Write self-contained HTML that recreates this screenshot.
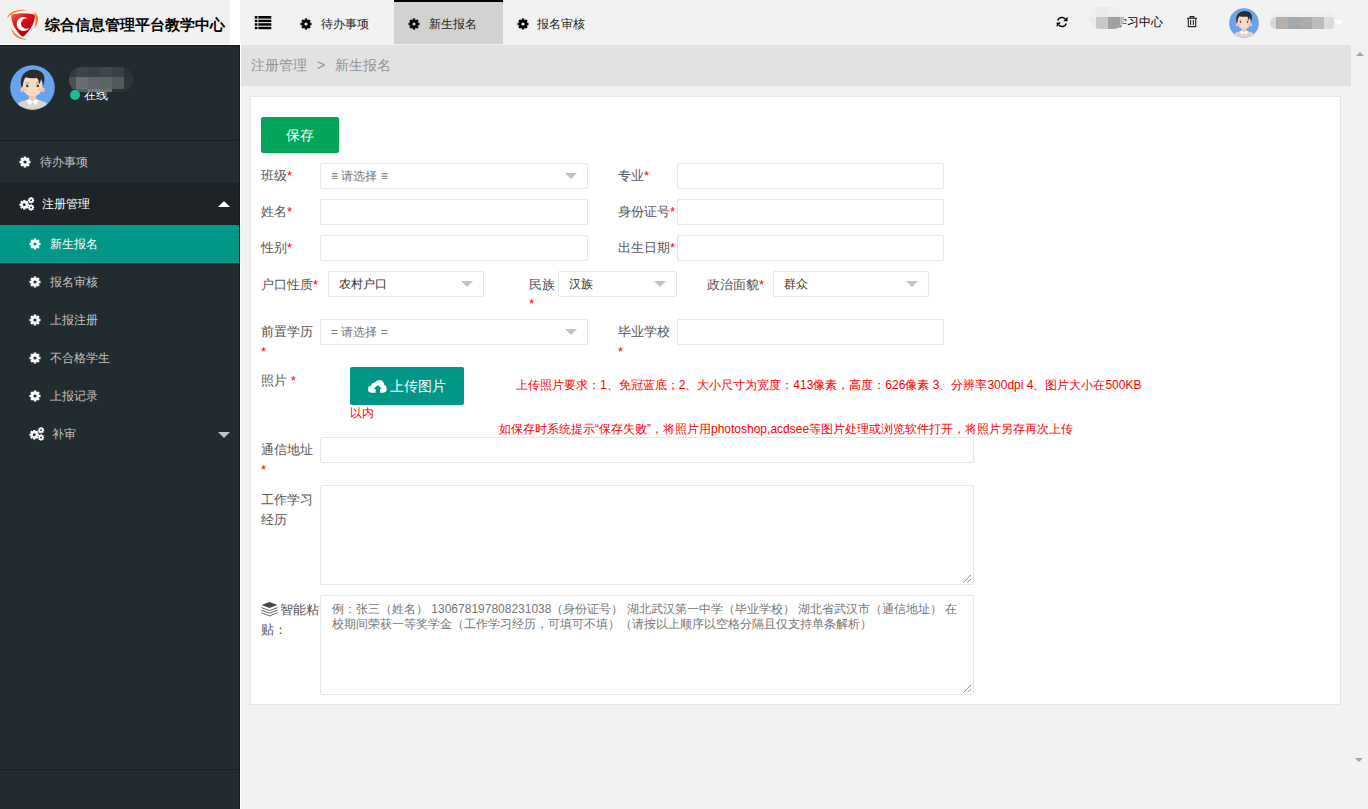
<!DOCTYPE html>
<html><head><meta charset="utf-8">
<style>
*{box-sizing:border-box;margin:0;padding:0}
html,body{width:1368px;height:809px;overflow:hidden;background:#f2f2f2;font-family:"Liberation Sans",sans-serif;color:#333}
.abs{position:absolute}
#logo{left:0;top:0;width:230px;height:44px;background:#f0f0f0}
#logostrip{left:230px;top:0;width:10px;height:45px;background:#fff}
#hdr{left:240px;top:0;width:1128px;height:44px;background:#f2f2f2}
#hline{left:0;top:44px;width:241px;height:1px;background:#fff}
#side{left:0;top:45px;width:240px;height:764px;background:#222b30;border-top:1px solid #131c21;border-right:1px solid #151b1f}
#vline{left:240px;top:45px;width:1px;height:764px;background:#fff}
#crumb{left:241px;top:45px;width:1110px;height:41px;background:#e2e2e2}
#panel{left:250px;top:96px;width:1091px;height:609px;background:#fff;border:1px solid #e6e6e6}
.tabtxt{font-size:12px;color:#222;top:16px;line-height:16px}
.menu{left:0;width:239px;height:38px;font-size:12px;color:#c2c2c2;line-height:38px}
.lbl{font-size:13px;color:#555;line-height:16px}
.req{color:#f00}
.inp{background:#fff;border:1px solid #e6e6e6;border-radius:2px;height:26px}
.sel .tri{position:absolute;right:10px;top:9px;width:0;height:0;border-left:6px solid transparent;border-right:6px solid transparent;border-top:6px solid #c2c2c2}
.seltxt{position:absolute;left:10px;top:5px;font-size:12px;line-height:14px;color:#333}
.ph{color:#757575}
.red{color:#f00;font-size:12px;line-height:14px}
</style></head><body>


<div id="logo" class="abs">
<svg class="abs" style="left:0;top:0" width="45" height="44" viewBox="0 0 45 44">
<defs><linearGradient id="lg1" x1="0.1" y1="0" x2="0.8" y2="1"><stop offset="0" stop-color="#ee6a4e"/><stop offset="0.3" stop-color="#dc1a1c"/><stop offset="0.7" stop-color="#c8000e"/><stop offset="1" stop-color="#9a0008"/></linearGradient></defs>
<path d="M11.2 16.6 Q10.8 14.4 13.2 13.9 Q22.6 12.4 32.8 14.1 Q35.4 14.7 34.9 17.3 C34 24.4 28.8 31.8 24.4 35.8 Q22.8 37.3 21.2 35.8 C16.6 31.6 11.8 24.4 11.2 16.6Z" fill="url(#lg1)"/>
<path d="M28.19 18.80 A7 7 0 1 0 29.74 27.17 A5.1 5.1 0 1 1 28.19 18.80Z" fill="#fff"/>
<path d="M7 18.8 Q8.6 11.6 17 10.4 Q22.4 9.6 27 10 Q21 10.6 16.6 11.8 Q10.4 13.6 7 18.8Z" fill="#ec6f1c"/>
<path d="M34.2 11.8 Q38.8 15.4 37.8 21.2 Q37 25.6 34.2 28.6 Q35.8 24 35.8 20.4 Q35.8 15.4 34.2 11.8Z" fill="#ec6f1c"/>
<path d="M11 28.2 Q12.8 35.2 18.4 38 Q22.6 40 27 39.8 Q21.8 38.6 18.2 36.2 Q14.2 33.4 11 28.2Z" fill="#ec6f1c"/>
</svg>
<div class="abs" style="left:45px;top:16px;font-size:15px;font-weight:bold;color:#000;line-height:18px;white-space:nowrap">综合信息管理平台教学中心</div>
</div>
<div id="logostrip" class="abs"></div>
<div id="hdr" class="abs"></div>
<div id="hline" class="abs"></div>
<!-- header icons -->
<svg class="abs" style="left:254px;top:15px" width="18" height="15" viewBox="0 0 18 15">
<g fill="#000"><rect x="0.8" y="1" width="2.6" height="2.6"/><rect x="4.3" y="1" width="13" height="2.6"/>
<rect x="0.8" y="4.7" width="2.6" height="2.4"/><rect x="4.3" y="4.7" width="13" height="2.4"/>
<rect x="0.8" y="8.2" width="2.6" height="2.5"/><rect x="4.3" y="8.2" width="13" height="2.5"/>
<rect x="0.8" y="11.8" width="2.6" height="2.4"/><rect x="4.3" y="11.8" width="13" height="2.4"/></g></svg>
<div class="abs" style="left:394px;top:0;width:109px;height:44px;background:#d2d2d2;border-top:2px solid #000"></div>
<svg class="abs" style="left:300px;top:18px;color:#000" width="12" height="12" viewBox="0 0 20 20"><g><circle cx="10" cy="10" r="4.8" fill="none" stroke="currentColor" stroke-width="4.2"/>
<g fill="currentColor">
<rect x="7.9" y="0.8" width="4.2" height="5" transform="rotate(0 10 10)"/>
<rect x="7.9" y="0.8" width="4.2" height="5" transform="rotate(45 10 10)"/>
<rect x="7.9" y="0.8" width="4.2" height="5" transform="rotate(90 10 10)"/>
<rect x="7.9" y="0.8" width="4.2" height="5" transform="rotate(135 10 10)"/>
<rect x="7.9" y="0.8" width="4.2" height="5" transform="rotate(180 10 10)"/>
<rect x="7.9" y="0.8" width="4.2" height="5" transform="rotate(225 10 10)"/>
<rect x="7.9" y="0.8" width="4.2" height="5" transform="rotate(270 10 10)"/>
<rect x="7.9" y="0.8" width="4.2" height="5" transform="rotate(315 10 10)"/>
</g></g></svg>
<div class="abs tabtxt" style="left:321px">待办事项</div>
<svg class="abs" style="left:408px;top:18px;color:#000" width="12" height="12" viewBox="0 0 20 20"><g><circle cx="10" cy="10" r="4.8" fill="none" stroke="currentColor" stroke-width="4.2"/>
<g fill="currentColor">
<rect x="7.9" y="0.8" width="4.2" height="5" transform="rotate(0 10 10)"/>
<rect x="7.9" y="0.8" width="4.2" height="5" transform="rotate(45 10 10)"/>
<rect x="7.9" y="0.8" width="4.2" height="5" transform="rotate(90 10 10)"/>
<rect x="7.9" y="0.8" width="4.2" height="5" transform="rotate(135 10 10)"/>
<rect x="7.9" y="0.8" width="4.2" height="5" transform="rotate(180 10 10)"/>
<rect x="7.9" y="0.8" width="4.2" height="5" transform="rotate(225 10 10)"/>
<rect x="7.9" y="0.8" width="4.2" height="5" transform="rotate(270 10 10)"/>
<rect x="7.9" y="0.8" width="4.2" height="5" transform="rotate(315 10 10)"/>
</g></g></svg>
<div class="abs tabtxt" style="left:429px">新生报名</div>
<svg class="abs" style="left:517px;top:18px;color:#000" width="12" height="12" viewBox="0 0 20 20"><g><circle cx="10" cy="10" r="4.8" fill="none" stroke="currentColor" stroke-width="4.2"/>
<g fill="currentColor">
<rect x="7.9" y="0.8" width="4.2" height="5" transform="rotate(0 10 10)"/>
<rect x="7.9" y="0.8" width="4.2" height="5" transform="rotate(45 10 10)"/>
<rect x="7.9" y="0.8" width="4.2" height="5" transform="rotate(90 10 10)"/>
<rect x="7.9" y="0.8" width="4.2" height="5" transform="rotate(135 10 10)"/>
<rect x="7.9" y="0.8" width="4.2" height="5" transform="rotate(180 10 10)"/>
<rect x="7.9" y="0.8" width="4.2" height="5" transform="rotate(225 10 10)"/>
<rect x="7.9" y="0.8" width="4.2" height="5" transform="rotate(270 10 10)"/>
<rect x="7.9" y="0.8" width="4.2" height="5" transform="rotate(315 10 10)"/>
</g></g></svg>
<div class="abs tabtxt" style="left:537px">报名审核</div>
<!-- right header -->
<svg class="abs" style="left:1056px;top:16px" width="12" height="12" viewBox="0 0 12 12">
<path d="M1.7 4.6 A4.5 4.5 0 0 1 9.3 2.9" fill="none" stroke="#000" stroke-width="1.5"/>
<path d="M11.6 0.8 L11.6 5.2 L7.2 5.2 Z" fill="#000"/>
<path d="M10.3 7.4 A4.5 4.5 0 0 1 2.7 9.1" fill="none" stroke="#000" stroke-width="1.5"/>
<path d="M0.6 11 L0.6 6.6 L5 6.6 Z" fill="#000"/>
</svg>
<div class="abs tabtxt" style="left:1115px;color:#000;top:14px">学习中心</div>
<div class="abs" style="left:1089px;top:7px;width:35px;height:22px;border-radius:11px 11px 11px 11px;overflow:hidden;background:#f0f0f0">
<div class="abs" style="left:7px;top:0;width:12px;height:10px;background:#e9e9e9"></div>
<div class="abs" style="left:19px;top:0;width:12px;height:10px;background:#eeeeee"></div>
<div class="abs" style="left:0;top:10px;width:7px;height:12px;background:#e9e9e9"></div>
<div class="abs" style="left:7px;top:10px;width:12px;height:12px;background:#cbc7c5"></div>
<div class="abs" style="left:19px;top:10px;width:12px;height:12px;background:#a1a0a2"></div>
<div class="abs" style="left:31px;top:10px;width:4px;height:12px;background:#c0c0c0"></div>
</div>
<svg class="abs" style="left:1186px;top:15px" width="12" height="13" viewBox="0 0 12 13">
<g fill="none" stroke="#222" stroke-width="1.1">
<path d="M1 3.3 H11"/><path d="M4.2 3.2 V1.6 H7.8 V3.2"/><path d="M2.3 3.4 V11.6 H9.7 V3.4"/>
<path d="M4.6 5 V10"/><path d="M7.4 5 V10"/></g></svg>
<svg class="abs" style="left:1229px;top:8px" width="30" height="30" viewBox="0 0 46 46">
<defs><clipPath id="av1229"><circle cx="23" cy="23" r="22.8"/></clipPath></defs>
<circle cx="23" cy="23" r="22.8" fill="#68a3ec"/>
<g clip-path="url(#av1229)">
<path d="M4 46 Q6 37.6 16 36 L23 35 L30 36 Q40 37.6 42 46Z" fill="#d9d5d0"/>
<rect x="19.4" y="29" width="7.2" height="8" fill="#f3c9ab"/>
<path d="M16.2 36.2 L19.4 34.4 L23 37.4 L20.2 41.4Z" fill="#fbfbfb"/>
<path d="M29.8 36.2 L26.6 34.4 L23 37.4 L25.8 41.4Z" fill="#fbfbfb"/>
<ellipse cx="12.4" cy="25.4" rx="1.8" ry="2.4" fill="#f3c9ab"/><ellipse cx="33.6" cy="25.4" rx="1.8" ry="2.4" fill="#f3c9ab"/>
<path d="M12.6 18 Q12.6 31.8 23 32 Q33.4 31.8 33.4 18 Q33 10 23 10 Q13 10 12.6 18Z" fill="#f8dbc4"/>
<path d="M11.4 22 Q9.6 12.2 15.4 7.6 Q20.6 3.6 27.6 5 Q35.4 6.8 35.2 14.6 Q35 19 33.6 21.6 Q33.2 16.4 31.8 14.2 Q31.2 18 30 19.4 Q29.6 15 27.6 13.2 Q21 14.2 16 12.6 Q13.6 15.4 13 22Z" fill="#2c2b2d"/>
<path d="M15.8 18.6 Q17.6 17.4 19.6 18.4" stroke="#8a6a5a" stroke-width="0.6" fill="none"/>
<path d="M26.4 18.4 Q28.4 17.4 30.2 18.6" stroke="#8a6a5a" stroke-width="0.6" fill="none"/>
<ellipse cx="17.6" cy="21.4" rx="1.2" ry="1.4" fill="#4a3426"/><ellipse cx="28.4" cy="21.4" rx="1.2" ry="1.4" fill="#4a3426"/>
<ellipse cx="15.8" cy="25" rx="1.9" ry="1.1" fill="#f4b6ad"/><ellipse cx="30.2" cy="25" rx="1.9" ry="1.1" fill="#f4b6ad"/>
<path d="M21.6 27.6 Q23 28.8 24.4 27.6Z" fill="#f09a94"/>
</g></svg>
<div class="abs" style="left:1270px;top:10px;width:64px;height:7px;background:#efefef;border-radius:6px 6px 0 0"></div>
<div class="abs" style="left:1270px;top:17px;width:64px;height:12px;border-radius:6px 4px 4px 6px;overflow:hidden;background:#d8d8d8">
<div class="abs" style="left:6px;top:0;width:12px;height:12px;background:#b5b0af"></div>
<div class="abs" style="left:18px;top:0;width:12px;height:12px;background:#a4a7ab"></div>
<div class="abs" style="left:30px;top:0;width:12px;height:12px;background:#ababab"></div>
<div class="abs" style="left:42px;top:0;width:12px;height:12px;background:#bcbabc"></div>
<div class="abs" style="left:54px;top:0;width:10px;height:12px;background:#dcdcdd"></div>
</div>
<div class="abs" style="left:1334px;top:20px;width:0;height:0;border-left:5px solid transparent;border-right:5px solid transparent;border-top:6px solid #fbfbfb"></div>

<div id="side" class="abs"></div>
<div id="vline" class="abs"></div>
<svg class="abs" style="left:10px;top:65px" width="45" height="45" viewBox="0 0 46 46">
<defs><clipPath id="av10"><circle cx="23" cy="23" r="22.8"/></clipPath></defs>
<circle cx="23" cy="23" r="22.8" fill="#68a3ec"/>
<g clip-path="url(#av10)">
<path d="M4 46 Q6 37.6 16 36 L23 35 L30 36 Q40 37.6 42 46Z" fill="#d9d5d0"/>
<rect x="19.4" y="29" width="7.2" height="8" fill="#f3c9ab"/>
<path d="M16.2 36.2 L19.4 34.4 L23 37.4 L20.2 41.4Z" fill="#fbfbfb"/>
<path d="M29.8 36.2 L26.6 34.4 L23 37.4 L25.8 41.4Z" fill="#fbfbfb"/>
<ellipse cx="12.4" cy="25.4" rx="1.8" ry="2.4" fill="#f3c9ab"/><ellipse cx="33.6" cy="25.4" rx="1.8" ry="2.4" fill="#f3c9ab"/>
<path d="M12.6 18 Q12.6 31.8 23 32 Q33.4 31.8 33.4 18 Q33 10 23 10 Q13 10 12.6 18Z" fill="#f8dbc4"/>
<path d="M11.4 22 Q9.6 12.2 15.4 7.6 Q20.6 3.6 27.6 5 Q35.4 6.8 35.2 14.6 Q35 19 33.6 21.6 Q33.2 16.4 31.8 14.2 Q31.2 18 30 19.4 Q29.6 15 27.6 13.2 Q21 14.2 16 12.6 Q13.6 15.4 13 22Z" fill="#2c2b2d"/>
<path d="M15.8 18.6 Q17.6 17.4 19.6 18.4" stroke="#8a6a5a" stroke-width="0.6" fill="none"/>
<path d="M26.4 18.4 Q28.4 17.4 30.2 18.6" stroke="#8a6a5a" stroke-width="0.6" fill="none"/>
<ellipse cx="17.6" cy="21.4" rx="1.2" ry="1.4" fill="#4a3426"/><ellipse cx="28.4" cy="21.4" rx="1.2" ry="1.4" fill="#4a3426"/>
<ellipse cx="15.8" cy="25" rx="1.9" ry="1.1" fill="#f4b6ad"/><ellipse cx="30.2" cy="25" rx="1.9" ry="1.1" fill="#f4b6ad"/>
<path d="M21.6 27.6 Q23 28.8 24.4 27.6Z" fill="#f09a94"/>
</g></svg>

<div class="abs" style="left:84px;top:87px;font-size:12px;line-height:16px;color:#fff">在线</div>
<div class="abs" style="left:69px;top:67px;width:64px;height:25px;border-radius:12px;overflow:hidden;background:#2b3338"><div class="abs" style="left:0px;top:0;width:7px;height:10px;background:#333b40"></div><div class="abs" style="left:7px;top:0;width:12px;height:10px;background:#3d444b"></div><div class="abs" style="left:19px;top:0;width:12px;height:10px;background:#394047"></div><div class="abs" style="left:31px;top:0;width:12px;height:10px;background:#3f464b"></div><div class="abs" style="left:43px;top:0;width:12px;height:10px;background:#393f46"></div><div class="abs" style="left:55px;top:0;width:9px;height:10px;background:#2b3338"></div><div class="abs" style="left:0px;top:10px;width:7px;height:12px;background:#485356"></div><div class="abs" style="left:7px;top:10px;width:12px;height:12px;background:#6a6e73"></div><div class="abs" style="left:19px;top:10px;width:12px;height:12px;background:#5f656b"></div><div class="abs" style="left:31px;top:10px;width:12px;height:12px;background:#5b6563"></div><div class="abs" style="left:43px;top:10px;width:12px;height:12px;background:#51595a"></div><div class="abs" style="left:55px;top:10px;width:9px;height:12px;background:#2f3639"></div><div class="abs" style="left:7px;top:22px;width:12px;height:3px;background:#3a6a64"></div><div class="abs" style="left:19px;top:22px;width:12px;height:3px;background:#787a7d"></div><div class="abs" style="left:31px;top:22px;width:12px;height:3px;background:#6c6f70"></div></div><div class="abs" style="left:70px;top:90px;width:10px;height:10px;border-radius:50%;background:#1ebc98"></div>
<div class="abs" style="left:0;top:140px;width:239px;height:1px;background:#1b2024"></div>
<div class="abs menu" style="top:141px;height:42px;line-height:42px;background:#232c30">
<svg class="abs" style="left:19px;top:15px;color:#fff" width="12" height="12" viewBox="0 0 20 20"><g><circle cx="10" cy="10" r="4.8" fill="none" stroke="currentColor" stroke-width="4.2"/>
<g fill="currentColor">
<rect x="7.9" y="0.8" width="4.2" height="5" transform="rotate(0 10 10)"/>
<rect x="7.9" y="0.8" width="4.2" height="5" transform="rotate(45 10 10)"/>
<rect x="7.9" y="0.8" width="4.2" height="5" transform="rotate(90 10 10)"/>
<rect x="7.9" y="0.8" width="4.2" height="5" transform="rotate(135 10 10)"/>
<rect x="7.9" y="0.8" width="4.2" height="5" transform="rotate(180 10 10)"/>
<rect x="7.9" y="0.8" width="4.2" height="5" transform="rotate(225 10 10)"/>
<rect x="7.9" y="0.8" width="4.2" height="5" transform="rotate(270 10 10)"/>
<rect x="7.9" y="0.8" width="4.2" height="5" transform="rotate(315 10 10)"/>
</g></g></svg>
<span class="abs" style="left:40px;top:0">待办事项</span></div>
<div class="abs menu" style="top:183px;height:42px;line-height:42px;background:#1e2328;color:#fff">
<svg class="abs" style="left:19px;top:14px;color:#fff" width="16" height="15" viewBox="0 0 16 15">
<svg x="0" y="2.4" width="10.6" height="10.6" viewBox="0 0 20 20"><g><circle cx="10" cy="10" r="4.8" fill="none" stroke="currentColor" stroke-width="4.2"/>
<g fill="currentColor">
<rect x="7.9" y="0.8" width="4.2" height="5" transform="rotate(0 10 10)"/>
<rect x="7.9" y="0.8" width="4.2" height="5" transform="rotate(45 10 10)"/>
<rect x="7.9" y="0.8" width="4.2" height="5" transform="rotate(90 10 10)"/>
<rect x="7.9" y="0.8" width="4.2" height="5" transform="rotate(135 10 10)"/>
<rect x="7.9" y="0.8" width="4.2" height="5" transform="rotate(180 10 10)"/>
<rect x="7.9" y="0.8" width="4.2" height="5" transform="rotate(225 10 10)"/>
<rect x="7.9" y="0.8" width="4.2" height="5" transform="rotate(270 10 10)"/>
<rect x="7.9" y="0.8" width="4.2" height="5" transform="rotate(315 10 10)"/>
</g></g></svg>
<svg x="8.6" y="-0.2" width="7" height="7" viewBox="0 0 20 20"><g><circle cx="10" cy="10" r="4.8" fill="none" stroke="currentColor" stroke-width="4.2"/>
<g fill="currentColor">
<rect x="7.9" y="0.8" width="4.2" height="5" transform="rotate(0 10 10)"/>
<rect x="7.9" y="0.8" width="4.2" height="5" transform="rotate(45 10 10)"/>
<rect x="7.9" y="0.8" width="4.2" height="5" transform="rotate(90 10 10)"/>
<rect x="7.9" y="0.8" width="4.2" height="5" transform="rotate(135 10 10)"/>
<rect x="7.9" y="0.8" width="4.2" height="5" transform="rotate(180 10 10)"/>
<rect x="7.9" y="0.8" width="4.2" height="5" transform="rotate(225 10 10)"/>
<rect x="7.9" y="0.8" width="4.2" height="5" transform="rotate(270 10 10)"/>
<rect x="7.9" y="0.8" width="4.2" height="5" transform="rotate(315 10 10)"/>
</g></g></svg>
<svg x="8.6" y="7" width="7" height="7" viewBox="0 0 20 20"><g><circle cx="10" cy="10" r="4.8" fill="none" stroke="currentColor" stroke-width="4.2"/>
<g fill="currentColor">
<rect x="7.9" y="0.8" width="4.2" height="5" transform="rotate(0 10 10)"/>
<rect x="7.9" y="0.8" width="4.2" height="5" transform="rotate(45 10 10)"/>
<rect x="7.9" y="0.8" width="4.2" height="5" transform="rotate(90 10 10)"/>
<rect x="7.9" y="0.8" width="4.2" height="5" transform="rotate(135 10 10)"/>
<rect x="7.9" y="0.8" width="4.2" height="5" transform="rotate(180 10 10)"/>
<rect x="7.9" y="0.8" width="4.2" height="5" transform="rotate(225 10 10)"/>
<rect x="7.9" y="0.8" width="4.2" height="5" transform="rotate(270 10 10)"/>
<rect x="7.9" y="0.8" width="4.2" height="5" transform="rotate(315 10 10)"/>
</g></g></svg>
</svg>
<span class="abs" style="left:42px;top:0">注册管理</span>
<div class="abs" style="left:218px;top:18px;width:0;height:0;border-left:6px solid transparent;border-right:6px solid transparent;border-bottom:6px solid #fff"></div>
</div>
<div class="abs menu" style="top:225px;background:#009688;color:#fff">
<svg class="abs" style="left:29px;top:13px;color:#fff" width="12" height="12" viewBox="0 0 20 20"><g><circle cx="10" cy="10" r="4.8" fill="none" stroke="currentColor" stroke-width="4.2"/>
<g fill="currentColor">
<rect x="7.9" y="0.8" width="4.2" height="5" transform="rotate(0 10 10)"/>
<rect x="7.9" y="0.8" width="4.2" height="5" transform="rotate(45 10 10)"/>
<rect x="7.9" y="0.8" width="4.2" height="5" transform="rotate(90 10 10)"/>
<rect x="7.9" y="0.8" width="4.2" height="5" transform="rotate(135 10 10)"/>
<rect x="7.9" y="0.8" width="4.2" height="5" transform="rotate(180 10 10)"/>
<rect x="7.9" y="0.8" width="4.2" height="5" transform="rotate(225 10 10)"/>
<rect x="7.9" y="0.8" width="4.2" height="5" transform="rotate(270 10 10)"/>
<rect x="7.9" y="0.8" width="4.2" height="5" transform="rotate(315 10 10)"/>
</g></g></svg>
<span class="abs" style="left:50px;top:0">新生报名</span></div>
<div class="abs menu" style="top:263px">
<svg class="abs" style="left:29px;top:13px;color:#fff" width="12" height="12" viewBox="0 0 20 20"><g><circle cx="10" cy="10" r="4.8" fill="none" stroke="currentColor" stroke-width="4.2"/>
<g fill="currentColor">
<rect x="7.9" y="0.8" width="4.2" height="5" transform="rotate(0 10 10)"/>
<rect x="7.9" y="0.8" width="4.2" height="5" transform="rotate(45 10 10)"/>
<rect x="7.9" y="0.8" width="4.2" height="5" transform="rotate(90 10 10)"/>
<rect x="7.9" y="0.8" width="4.2" height="5" transform="rotate(135 10 10)"/>
<rect x="7.9" y="0.8" width="4.2" height="5" transform="rotate(180 10 10)"/>
<rect x="7.9" y="0.8" width="4.2" height="5" transform="rotate(225 10 10)"/>
<rect x="7.9" y="0.8" width="4.2" height="5" transform="rotate(270 10 10)"/>
<rect x="7.9" y="0.8" width="4.2" height="5" transform="rotate(315 10 10)"/>
</g></g></svg>
<span class="abs" style="left:50px;top:0">报名审核</span></div>
<div class="abs menu" style="top:301px">
<svg class="abs" style="left:29px;top:13px;color:#fff" width="12" height="12" viewBox="0 0 20 20"><g><circle cx="10" cy="10" r="4.8" fill="none" stroke="currentColor" stroke-width="4.2"/>
<g fill="currentColor">
<rect x="7.9" y="0.8" width="4.2" height="5" transform="rotate(0 10 10)"/>
<rect x="7.9" y="0.8" width="4.2" height="5" transform="rotate(45 10 10)"/>
<rect x="7.9" y="0.8" width="4.2" height="5" transform="rotate(90 10 10)"/>
<rect x="7.9" y="0.8" width="4.2" height="5" transform="rotate(135 10 10)"/>
<rect x="7.9" y="0.8" width="4.2" height="5" transform="rotate(180 10 10)"/>
<rect x="7.9" y="0.8" width="4.2" height="5" transform="rotate(225 10 10)"/>
<rect x="7.9" y="0.8" width="4.2" height="5" transform="rotate(270 10 10)"/>
<rect x="7.9" y="0.8" width="4.2" height="5" transform="rotate(315 10 10)"/>
</g></g></svg>
<span class="abs" style="left:50px;top:0">上报注册</span></div>
<div class="abs menu" style="top:339px">
<svg class="abs" style="left:29px;top:13px;color:#fff" width="12" height="12" viewBox="0 0 20 20"><g><circle cx="10" cy="10" r="4.8" fill="none" stroke="currentColor" stroke-width="4.2"/>
<g fill="currentColor">
<rect x="7.9" y="0.8" width="4.2" height="5" transform="rotate(0 10 10)"/>
<rect x="7.9" y="0.8" width="4.2" height="5" transform="rotate(45 10 10)"/>
<rect x="7.9" y="0.8" width="4.2" height="5" transform="rotate(90 10 10)"/>
<rect x="7.9" y="0.8" width="4.2" height="5" transform="rotate(135 10 10)"/>
<rect x="7.9" y="0.8" width="4.2" height="5" transform="rotate(180 10 10)"/>
<rect x="7.9" y="0.8" width="4.2" height="5" transform="rotate(225 10 10)"/>
<rect x="7.9" y="0.8" width="4.2" height="5" transform="rotate(270 10 10)"/>
<rect x="7.9" y="0.8" width="4.2" height="5" transform="rotate(315 10 10)"/>
</g></g></svg>
<span class="abs" style="left:50px;top:0">不合格学生</span></div>
<div class="abs menu" style="top:377px">
<svg class="abs" style="left:29px;top:13px;color:#fff" width="12" height="12" viewBox="0 0 20 20"><g><circle cx="10" cy="10" r="4.8" fill="none" stroke="currentColor" stroke-width="4.2"/>
<g fill="currentColor">
<rect x="7.9" y="0.8" width="4.2" height="5" transform="rotate(0 10 10)"/>
<rect x="7.9" y="0.8" width="4.2" height="5" transform="rotate(45 10 10)"/>
<rect x="7.9" y="0.8" width="4.2" height="5" transform="rotate(90 10 10)"/>
<rect x="7.9" y="0.8" width="4.2" height="5" transform="rotate(135 10 10)"/>
<rect x="7.9" y="0.8" width="4.2" height="5" transform="rotate(180 10 10)"/>
<rect x="7.9" y="0.8" width="4.2" height="5" transform="rotate(225 10 10)"/>
<rect x="7.9" y="0.8" width="4.2" height="5" transform="rotate(270 10 10)"/>
<rect x="7.9" y="0.8" width="4.2" height="5" transform="rotate(315 10 10)"/>
</g></g></svg>
<span class="abs" style="left:50px;top:0">上报记录</span></div>
<div class="abs menu" style="top:415px">
<svg class="abs" style="left:29px;top:12px;color:#fff" width="16" height="15" viewBox="0 0 16 15">
<svg x="0" y="2.4" width="10.6" height="10.6" viewBox="0 0 20 20"><g><circle cx="10" cy="10" r="4.8" fill="none" stroke="currentColor" stroke-width="4.2"/>
<g fill="currentColor">
<rect x="7.9" y="0.8" width="4.2" height="5" transform="rotate(0 10 10)"/>
<rect x="7.9" y="0.8" width="4.2" height="5" transform="rotate(45 10 10)"/>
<rect x="7.9" y="0.8" width="4.2" height="5" transform="rotate(90 10 10)"/>
<rect x="7.9" y="0.8" width="4.2" height="5" transform="rotate(135 10 10)"/>
<rect x="7.9" y="0.8" width="4.2" height="5" transform="rotate(180 10 10)"/>
<rect x="7.9" y="0.8" width="4.2" height="5" transform="rotate(225 10 10)"/>
<rect x="7.9" y="0.8" width="4.2" height="5" transform="rotate(270 10 10)"/>
<rect x="7.9" y="0.8" width="4.2" height="5" transform="rotate(315 10 10)"/>
</g></g></svg>
<svg x="8.6" y="-0.2" width="7" height="7" viewBox="0 0 20 20"><g><circle cx="10" cy="10" r="4.8" fill="none" stroke="currentColor" stroke-width="4.2"/>
<g fill="currentColor">
<rect x="7.9" y="0.8" width="4.2" height="5" transform="rotate(0 10 10)"/>
<rect x="7.9" y="0.8" width="4.2" height="5" transform="rotate(45 10 10)"/>
<rect x="7.9" y="0.8" width="4.2" height="5" transform="rotate(90 10 10)"/>
<rect x="7.9" y="0.8" width="4.2" height="5" transform="rotate(135 10 10)"/>
<rect x="7.9" y="0.8" width="4.2" height="5" transform="rotate(180 10 10)"/>
<rect x="7.9" y="0.8" width="4.2" height="5" transform="rotate(225 10 10)"/>
<rect x="7.9" y="0.8" width="4.2" height="5" transform="rotate(270 10 10)"/>
<rect x="7.9" y="0.8" width="4.2" height="5" transform="rotate(315 10 10)"/>
</g></g></svg>
<svg x="8.6" y="7" width="7" height="7" viewBox="0 0 20 20"><g><circle cx="10" cy="10" r="4.8" fill="none" stroke="currentColor" stroke-width="4.2"/>
<g fill="currentColor">
<rect x="7.9" y="0.8" width="4.2" height="5" transform="rotate(0 10 10)"/>
<rect x="7.9" y="0.8" width="4.2" height="5" transform="rotate(45 10 10)"/>
<rect x="7.9" y="0.8" width="4.2" height="5" transform="rotate(90 10 10)"/>
<rect x="7.9" y="0.8" width="4.2" height="5" transform="rotate(135 10 10)"/>
<rect x="7.9" y="0.8" width="4.2" height="5" transform="rotate(180 10 10)"/>
<rect x="7.9" y="0.8" width="4.2" height="5" transform="rotate(225 10 10)"/>
<rect x="7.9" y="0.8" width="4.2" height="5" transform="rotate(270 10 10)"/>
<rect x="7.9" y="0.8" width="4.2" height="5" transform="rotate(315 10 10)"/>
</g></g></svg>
</svg>
<span class="abs" style="left:52px;top:0">补审</span>
<div class="abs" style="left:218px;top:17px;width:0;height:0;border-left:6px solid transparent;border-right:6px solid transparent;border-top:6px solid #c2c2c2"></div>
</div>
<div class="abs" style="left:0;top:769px;width:239px;height:1px;background:#1b2024"></div>

<div id="crumb" class="abs"></div>
<div class="abs" style="left:251px;top:57px;font-size:14px;line-height:16px;color:#939393;white-space:nowrap">注册管理</div><div class="abs" style="left:317px;top:57px;font-size:14px;line-height:16px;color:#939393">&gt;</div><div class="abs" style="left:335px;top:57px;font-size:14px;line-height:16px;color:#939393;white-space:nowrap">新生报名</div>
<div class="abs" style="left:1356px;top:52px;width:0;height:0;border-left:4px solid transparent;border-right:4px solid transparent;border-bottom:4px solid #a3a3a3"></div>
<div class="abs" style="left:1355px;top:758px;width:0;height:0;border-left:4px solid transparent;border-right:4px solid transparent;border-top:4px solid #a3a3a3"></div>

<div id="panel" class="abs"></div>
<div class="abs" style="left:261px;top:117px;width:78px;height:36px;background:#03a659;border-radius:2px;color:#fff;font-size:14px;line-height:36px;text-align:center">保存</div>
<div class="abs lbl" style="left:261px;top:168px;white-space:nowrap">班级<span class="req">*</span></div>
<div class="abs inp sel" style="left:320px;top:163px;width:268px"><span class="seltxt ph">≡ 请选择 ≡</span><span class="tri"></span></div>
<div class="abs lbl" style="left:618px;top:168px;white-space:nowrap">专业<span class="req">*</span></div>
<div class="abs inp" style="left:677px;top:163px;width:267px;height:26px"></div>
<div class="abs lbl" style="left:261px;top:204px;white-space:nowrap">姓名<span class="req">*</span></div>
<div class="abs inp" style="left:320px;top:199px;width:268px;height:26px"></div>
<div class="abs lbl" style="left:618px;top:204px;white-space:nowrap">身份证号<span class="req">*</span></div>
<div class="abs inp" style="left:677px;top:199px;width:267px;height:26px"></div>
<div class="abs lbl" style="left:261px;top:240px;white-space:nowrap">性别<span class="req">*</span></div>
<div class="abs inp" style="left:320px;top:235px;width:268px;height:26px"></div>
<div class="abs lbl" style="left:618px;top:240px;white-space:nowrap">出生日期<span class="req">*</span></div>
<div class="abs inp" style="left:677px;top:235px;width:267px;height:26px"></div>
<div class="abs lbl" style="left:261px;top:277px;white-space:nowrap">户口性质<span class="req">*</span></div>
<div class="abs inp sel" style="left:328px;top:271px;width:156px"><span class="seltxt">农村户口</span><span class="tri"></span></div>
<div class="abs lbl" style="left:529px;top:277px;white-space:nowrap">民族</div><div class="abs lbl req" style="left:529px;top:296px">*</div>
<div class="abs inp sel" style="left:558px;top:271px;width:119px"><span class="seltxt">汉族</span><span class="tri"></span></div>
<div class="abs lbl" style="left:707px;top:277px;white-space:nowrap">政治面貌<span class="req">*</span></div>
<div class="abs inp sel" style="left:773px;top:271px;width:156px"><span class="seltxt">群众</span><span class="tri"></span></div>
<div class="abs lbl" style="left:261px;top:324px;white-space:nowrap">前置学历</div><div class="abs lbl req" style="left:261px;top:344px">*</div>
<div class="abs inp sel" style="left:320px;top:319px;width:268px"><span class="seltxt ph">= 请选择 =</span><span class="tri"></span></div>
<div class="abs lbl" style="left:618px;top:324px;white-space:nowrap">毕业学校</div><div class="abs lbl req" style="left:618px;top:344px">*</div>
<div class="abs inp" style="left:677px;top:319px;width:267px;height:26px"></div>
<div class="abs lbl" style="left:261px;top:373px">照片 <span class="req">*</span></div>
<div class="abs" style="left:350px;top:367px;width:114px;height:38px;background:#009688;border-radius:2px;color:#fff;font-size:14px;line-height:38px">
<svg class="abs" style="left:18px;top:12px" width="19" height="15" viewBox="0 0 19 15"><path d="M4 13.8 Q0 13.8 0 10.2 Q0 7 3.2 6.6 Q3.8 3.8 6.8 3.6 Q8.4 1 11.6 1 Q15.6 1.2 16 5.4 Q18.7 6.4 18.7 9.8 Q18.7 13.8 14.6 13.8Z" fill="#fff"/>
<path d="M9.8 6 L14 10 L12 10 L12 14 L7.6 14 L7.6 10 L5.6 10Z" fill="#009688"/></svg>
<span class="abs" style="left:40px;top:0">上传图片</span></div>
<div class="abs red" style="left:350px;top:406px">以内</div>
<div class="abs red" style="left:516px;top:378px;white-space:nowrap">上传照片要求：1、免冠蓝底；2、大小尺寸为宽度：413像素，高度：626像素 3、分辨率300dpi 4、图片大小在500KB</div>
<div class="abs red" style="left:499px;top:422px;white-space:nowrap">如保存时系统提示“保存失败”，将照片用photoshop,acdsee等图片处理或浏览软件打开，将照片另存再次上传</div>
<div class="abs lbl" style="left:261px;top:442px;white-space:nowrap">通信地址</div><div class="abs lbl req" style="left:261px;top:462px">*</div>
<div class="abs inp" style="left:320px;top:437px;width:654px;height:26px"></div>
<div class="abs lbl" style="left:261px;top:490px;line-height:20px;width:58px">工作学习<br>经历</div>
<div class="abs inp" style="left:320px;top:485px;width:654px;height:100px"><svg class="abs" style="right:1px;bottom:1px" width="9" height="9" viewBox="0 0 9 9"><path d="M7.7 1.2 L0.3 8.5 M7.7 5.2 L4.3 8.5" stroke="#555" stroke-width="1" stroke-dasharray="1 0.4"/></svg></div>
<div class="abs lbl" style="left:261px;top:600px;line-height:20px;width:60px">
<svg style="position:absolute;left:0;top:2px" width="17" height="15" viewBox="0 0 17 15"><path d="M8.5 0 L16.5 3 L8.5 6 L0.5 3Z" fill="#484848"/><g fill="none" stroke="#5a5a5a" stroke-width="0.95"><path d="M0.5 5.6 L8.5 8.6 L16.5 5.6"/><path d="M0.5 8.2 L8.5 11.2 L16.5 8.2"/><path d="M0.5 10.8 L8.5 13.8 L16.5 10.8"/></g></svg>
<span style="padding-left:19px">智能粘</span><br>贴：</div>
<div class="abs inp" style="left:320px;top:595px;width:654px;height:100px">
<div class="abs" style="left:11px;top:6px;width:630px;font-size:12px;line-height:15px;color:#757575">例：张三（姓名） 130678197808231038（身份证号） 湖北武汉第一中学（毕业学校） 湖北省武汉市（通信地址） 在校期间荣获一等奖学金（工作学习经历，可填可不填）（请按以上顺序以空格分隔且仅支持单条解析）</div>
<svg class="abs" style="right:1px;bottom:1px" width="9" height="9" viewBox="0 0 9 9"><path d="M7.7 1.2 L0.3 8.5 M7.7 5.2 L4.3 8.5" stroke="#555" stroke-width="1" stroke-dasharray="1 0.4"/></svg></div>
</body></html>
